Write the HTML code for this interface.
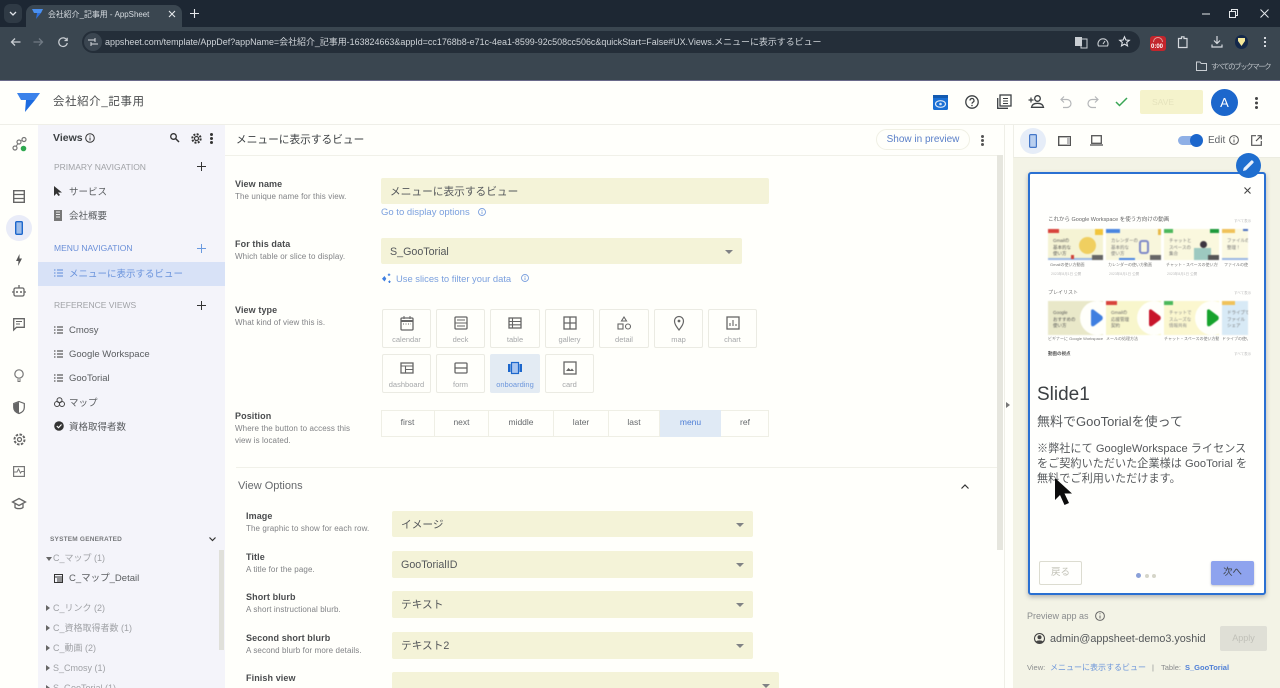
<!DOCTYPE html>
<html lang="ja"><head><meta charset="utf-8"><title>会社紹介_記事用 - AppSheet</title>
<style>
*{box-sizing:border-box}
html,body{margin:0;padding:0;width:1280px;height:688px;overflow:hidden;background:#fffffb;font-family:"Liberation Sans","Noto Sans CJK JP",sans-serif;color:#3c4043}
#root{position:absolute;left:0;top:0;width:1280px;height:688px;overflow:hidden}
.a{position:absolute}
.t{position:absolute;white-space:nowrap;line-height:1.2}
svg{position:absolute;overflow:visible}
.lbl{position:absolute;font-size:9px;font-weight:700;color:#4a4c4e;white-space:nowrap;letter-spacing:.1px}
.sub{position:absolute;font-size:8px;color:#808285;white-space:nowrap;letter-spacing:.1px;line-height:12px}
.fld{position:absolute;background:#f4f3d8;border-radius:2px;font-size:10.7px;color:#55585b;line-height:28px;padding-left:9px;white-space:nowrap;overflow:hidden}
.fld i{position:absolute;right:9px;top:12px;width:0;height:0;border-left:4px solid transparent;border-right:4px solid transparent;border-top:4px solid #808285}
.vt{position:absolute;width:50px;height:39px;border:1px solid #ebebe3;border-radius:2px;font-size:7.5px;color:#a5a7a9;text-align:center;padding-top:25px;line-height:10px}
.pos{position:absolute;top:410px;height:27px;border-right:1px solid #efefe5;font-size:8.5px;color:#66696c;text-align:center;line-height:25px}
.nav{position:absolute;left:69px;font-size:9.5px;color:#5a5d60;white-space:nowrap;line-height:14px;margin-top:2px}
.sec{position:absolute;left:54px;font-size:8.5px;color:#a0a2a6;white-space:nowrap;line-height:12px}
.plus{position:absolute;left:197px;width:9px;height:9px;background:linear-gradient(#333,#333) center/9px 1.4px no-repeat,linear-gradient(#333,#333) center/1.4px 9px no-repeat}
.sys{position:absolute;left:53px;font-size:9px;color:#a0a2a6;white-space:nowrap;line-height:12px}
.tri{position:absolute;left:46px;width:0;height:0;border-top:3px solid transparent;border-bottom:3px solid transparent;border-left:4px solid #666}
.thumb{position:absolute;background:#f5f3d4;overflow:hidden;filter:blur(.4px)}
.tg{position:absolute;font-size:4.5px;line-height:6.5px;color:#666;white-space:nowrap}
</style></head>
<body><div id="root">
<!-- browser chrome -->
<div class="a" style="left:0;top:0;width:1280px;height:27px;background:#1d2733"></div>
<div class="a" style="left:0;top:27px;width:1280px;height:54px;background:#3a4650"></div>
<div class="a" style="left:4px;top:4px;width:18px;height:19px;background:#2f3a45;border-radius:6px"></div>
<svg style="left:9px;top:11px" width="8" height="5"><path d="M1 1l3 3 3-3" fill="none" stroke="#dfe3e8" stroke-width="1.3"/></svg>
<div class="a" style="left:26px;top:5px;width:156px;height:24px;background:#3a4650;border-radius:8px 8px 0 0"></div>
<svg style="left:32px;top:9px" width="11" height="10"><path d="M0 0h11l-2 4H2z" fill="#4a90f0"/><path d="M5 4h4L4 10z" fill="#2d6fdc"/></svg>
<div class="t" style="left:48px;top:10px;font-size:7.9px;color:#d8dde2">会社紹介_記事用 - AppSheet</div>
<svg style="left:168px;top:10px" width="8" height="8"><path d="M1 1l6 6M7 1l-6 6" stroke="#e5e8eb" stroke-width="1.1"/></svg>
<svg style="left:190px;top:9px" width="9" height="9"><path d="M4.500 0v9M0 4.500h9" stroke="#e5e8eb" stroke-width="1.1"/></svg>
<svg style="left:1202px;top:13px" width="8" height="2"><path d="M0 1h8" stroke="#e5e8eb"/></svg>
<svg style="left:1229px;top:9px" width="9" height="9"><path d="M.5 2.500h6v6h-6zM2.500 2.500v-2h6v6h-2" fill="none" stroke="#e5e8eb"/></svg>
<svg style="left:1260px;top:9px" width="9" height="9"><path d="M.5.5l8 8M8.500.5l-8 8" stroke="#e5e8eb"/></svg>
<svg style="left:10px;top:37px" width="11" height="10"><path d="M10.500 5H1.500M5 1.500L1.500 5 5 8.500" fill="none" stroke="#c9ced3" stroke-width="1.3"/></svg>
<svg style="left:33px;top:37px" width="11" height="10"><path d="M.5 5h9M6 1.500L9.500 5 6 8.500" fill="none" stroke="#707a84" stroke-width="1.3"/></svg>
<svg style="left:58px;top:37px" width="10" height="10"><path d="M8.800 3A4.300 4.300 0 1 0 9.300 6M9.200.8v2.700H6.500" fill="none" stroke="#c9ced3" stroke-width="1.2"/></svg>
<div class="a" style="left:82px;top:31px;width:1058px;height:22px;background:#242e39;border-radius:11px"></div>
<div class="a" style="left:84px;top:33px;width:18px;height:18px;background:#3a4550;border-radius:9px"></div>
<svg style="left:88px;top:38px" width="10" height="8"><path d="M0 2h7M3 6h7M7 0v4M3 4v4" stroke="#d5d9de"/></svg>
<div class="t" style="left:105px;top:37px;font-size:8.95px;color:#cfd4d9">appsheet.com/template/AppDef?appName=会社紹介_記事用-163824663&amp;appId=cc1768b8-e71c-4ea1-8599-92c508cc506c&amp;quickStart=False#UX.Views.メニューに表示するビュー</div>
<svg style="left:1075px;top:36px" width="12" height="12"><rect x="0" y="1" width="7" height="9" fill="#c9ced3"/><rect x="6" y="3" width="6" height="9" fill="none" stroke="#c9ced3"/></svg>
<svg style="left:1097px;top:37px" width="12" height="10"><path d="M1.500 9A5 5 0 1 1 10.500 9zM6 7l2-3" fill="none" stroke="#c9ced3" stroke-width="1.100"/></svg>
<svg style="left:1119px;top:36px" width="11" height="11"><path d="M5.500.8l1.400 3.200 3.400.3-2.600 2.200.8 3.400-3-1.800-3 1.800.8-3.400L.7 4.300l3.400-.3z" fill="none" stroke="#dfe3e8" stroke-width="1.100"/></svg>
<div class="a" style="left:1150px;top:36px;width:16px;height:15px;background:#c3252c;border-radius:3px"></div>
<div class="a" style="left:1153px;top:37px;width:10px;height:5px;border:1.500px solid #e2a29e;border-bottom:0;border-radius:5px 5px 0 0"></div>
<div class="t" style="left:1151px;top:44px;font-size:6px;color:#fff;font-weight:700">0:00</div>
<svg style="left:1177px;top:36px" width="11" height="12"><path d="M1.500 2.500h3V.8h2.500v1.700h3v9h-8.500z" fill="none" stroke="#d5d9de" stroke-width="1.200"/></svg>
<svg style="left:1211px;top:36px" width="12" height="12"><path d="M6 0v7M3 4.500L6 7.500l3-3M1 8.500v2.500h10V8.500" fill="none" stroke="#d5d9de" stroke-width="1.200"/></svg>
<div class="a" style="left:1235px;top:35px;width:13px;height:14px;background:#14284a;border-radius:7px"></div>
<svg style="left:1238px;top:38px" width="7" height="8"><path d="M0 0h7v3L3.500 8 0 3z" fill="#f5e89a"/></svg>
<div class="a" style="left:1264px;top:37px;width:2px;height:2px;background:#d5d9de;box-shadow:0 4px #d5d9de,0 8px #d5d9de"></div>
<svg style="left:1196px;top:61px" width="11" height="10"><path d="M.5 1h3.500l1.200 1.500h5.300v7H.5z" fill="none" stroke="#c9ced3"/></svg>
<div class="t" style="left:1211px;top:62px;font-size:7.5px;color:#bfc4c9;letter-spacing:-1.500px">すべてのブックマーク</div>
<div class="a" style="left:0;top:80px;width:1280px;height:1px;background:#6a6a8a"></div>

<!-- app header -->
<div class="a" style="left:0;top:81px;width:1280px;height:44px;background:#fffffb"></div>
<div class="a" style="left:0;top:124px;width:1280px;height:1px;background:#efefe8"></div>
<svg style="left:17px;top:93px" width="23" height="19"><path d="M0 0h23l-5 7H4z" fill="#3b82ea"/><path d="M9 7h9L8 19z" fill="#1c6be0"/></svg>
<div class="t" style="left:53px;top:96px;font-size:11.4px;color:#4a4c4e;letter-spacing:.7px">会社紹介_記事用</div>
<svg style="left:933px;top:95px" width="15" height="15"><rect width="15" height="15" rx="1.500" fill="#1a6fd4"/><rect y="0" width="15" height="3" fill="#135ab0"/><ellipse cx="7.500" cy="9" rx="5" ry="3.300" fill="none" stroke="#d8e6f8" stroke-width="1.200"/><circle cx="7.500" cy="9" r="1.300" fill="#d8e6f8"/></svg>
<svg style="left:965px;top:95px" width="14" height="14"><circle cx="7" cy="7" r="6.200" fill="none" stroke="#3c4043" stroke-width="1.300"/><path d="M5 5.500a2 2 0 1 1 3 1.700c-.7.400-1 .9-1 1.500" fill="none" stroke="#3c4043" stroke-width="1.200"/><circle cx="7" cy="10.500" r=".8" fill="#3c4043"/></svg>
<svg style="left:997px;top:95px" width="14" height="14"><rect x="3" y="0" width="11" height="11" fill="none" stroke="#3c4043" stroke-width="1.300"/><path d="M.7 3v10.300H11" fill="none" stroke="#3c4043" stroke-width="1.300"/><path d="M6 3.500h5M6 6h5M6 8.500h5" stroke="#3c4043"/></svg>
<svg style="left:1028px;top:95px" width="16" height="13"><circle cx="9.500" cy="3.500" r="2.800" fill="none" stroke="#3c4043" stroke-width="1.300"/><path d="M3.500 12.300c.5-3 3-4 6-4s5.500 1 6 4z" fill="none" stroke="#3c4043" stroke-width="1.300"/><path d="M3 2.500v5M.5 5h5" stroke="#3c4043" stroke-width="1.200"/></svg>
<svg style="left:1060px;top:96px" width="12" height="12"><path d="M4 .5L1 3.500l3 3M1 3.500h6a4 4 0 0 1 0 8H3" fill="none" stroke="#b5b7b9" stroke-width="1.200"/></svg>
<svg style="left:1087px;top:96px" width="12" height="12"><path d="M8 .5l3 3-3 3M11 3.500H5a4 4 0 0 0 0 8h4" fill="none" stroke="#b5b7b9" stroke-width="1.200"/></svg>
<svg style="left:1115px;top:97px" width="13" height="10"><path d="M1 5l3.500 3.500L12 1" fill="none" stroke="#3aa655" stroke-width="1.500"/></svg>
<div class="a" style="left:1140px;top:90px;width:63px;height:24px;background:#f5f3cc;border-radius:2px"></div>
<div class="t" style="left:1152px;top:97px;font-size:8.500px;color:#e5e3bd">SAVE</div>
<div class="a" style="left:1211px;top:89px;width:27px;height:27px;border-radius:50%;background:#1c67cc;color:#fff;font-size:13px;text-align:center;line-height:27px">A</div>
<div class="a" style="left:1255px;top:97px;width:3px;height:3px;background:#444;border-radius:50%;box-shadow:0 4.500px #444,0 9px #444"></div>

<!-- left rail -->
<div class="a" style="left:0;top:125px;width:38px;height:563px;background:#fffffb"></div>
<svg style="left:12px;top:137px" width="15" height="15"><circle cx="3" cy="11" r="2" fill="none" stroke="#777" stroke-width="1.200"/><circle cx="7" cy="5" r="2" fill="none" stroke="#777" stroke-width="1.200"/><circle cx="12" cy="2.500" r="2" fill="none" stroke="#777" stroke-width="1.200"/><path d="M4 9.500L6 6.500M9 4l1.500-1" stroke="#777"/><circle cx="11.500" cy="11.500" r="2.800" fill="#2fa84f"/></svg>
<svg style="left:13px;top:190px" width="12" height="13"><rect x=".7" y=".7" width="10.600" height="11.600" fill="none" stroke="#666" stroke-width="1.400"/><path d="M1 4.500h10M1 8.500h10" stroke="#666" stroke-width="1.300"/></svg>
<div class="a" style="left:6px;top:215px;width:26px;height:26px;border-radius:50%;background:#e9ecf8"></div>
<svg style="left:15px;top:221px" width="8" height="14"><rect x=".7" y=".7" width="6.600" height="12.600" rx="1" fill="#9dbdea" stroke="#1c67cc" stroke-width="1.400"/></svg>
<svg style="left:16px;top:254px" width="6" height="12"><path d="M3.500 0L0 7h2.500L2 12 6 4.500H3.500z" fill="#555"/></svg>
<svg style="left:12px;top:284px" width="14" height="13"><rect x="2" y="4" width="10" height="8" rx="1.500" fill="none" stroke="#666" stroke-width="1.300"/><path d="M0 8h2M12 8h2M7 1v3" stroke="#666" stroke-width="1.300"/><circle cx="5" cy="8" r="1" fill="#666"/><circle cx="9" cy="8" r="1" fill="#666"/></svg>
<svg style="left:13px;top:318px" width="12" height="13"><path d="M.7.700h10.600v8.600H3.500L.7 12z" fill="none" stroke="#666" stroke-width="1.300"/><path d="M3 3.500h6M3 6h4" stroke="#666"/></svg>
<svg style="left:14px;top:369px" width="10" height="13"><circle cx="5" cy="5" r="4.200" fill="none" stroke="#777" stroke-width="1.200"/><path d="M3 11h4M3.500 12.500h3" stroke="#777"/></svg>
<svg style="left:13px;top:401px" width="12" height="13"><path d="M6 .5l5.300 2v4c0 3-2.300 5-5.300 6-3-1-5.300-3-5.300-6v-4z" fill="none" stroke="#666" stroke-width="1.200"/><path d="M6 1v11c-3-1-5-3-5-5.500V3z" fill="#666"/></svg>
<svg style="left:13px;top:433px" width="13" height="13"><circle cx="6.500" cy="6.500" r="2" fill="none" stroke="#666" stroke-width="1.200"/><circle cx="6.500" cy="6.500" r="5" fill="none" stroke="#666" stroke-width="2" stroke-dasharray="2.500 1.400"/></svg>
<svg style="left:13px;top:466px" width="12" height="11"><rect x=".6" y=".6" width="10.800" height="9.800" fill="none" stroke="#777" stroke-width="1.200"/><path d="M1 6h3l1.500-3 2 4 1-1.500h2.500" fill="none" stroke="#777"/></svg>
<svg style="left:12px;top:498px" width="14" height="12"><path d="M7 .5L13.500 4 7 7.500.5 4z" fill="none" stroke="#666" stroke-width="1.300"/><path d="M3 6v3.500c1.500 1.500 6.500 1.500 8 0V6" fill="none" stroke="#666" stroke-width="1.300"/></svg>

<!-- views sidebar -->
<div class="a" style="left:38px;top:125px;width:187px;height:563px;background:#f4f4fa"></div>
<div class="t" style="left:53px;top:132px;font-size:10.500px;color:#3c4043;font-weight:700">Views</div>
<svg style="left:85px;top:133px" width="10" height="10"><circle cx="5" cy="5" r="4.300" fill="none" stroke="#333"/><path d="M5 4.500v3M5 2.500v1" stroke="#333"/></svg>
<svg style="left:170px;top:133px" width="9" height="9"><circle cx="3.500" cy="3.500" r="2.800" fill="none" stroke="#333" stroke-width="1.300"/><path d="M5.500 5.500L9 9" stroke="#333" stroke-width="1.500"/></svg>
<svg style="left:191px;top:133px" width="11" height="11"><circle cx="5.500" cy="5.500" r="2" fill="none" stroke="#333" stroke-width="1.200"/><circle cx="5.500" cy="5.500" r="4.200" fill="none" stroke="#333" stroke-width="2" stroke-dasharray="2 1.300"/></svg>
<div class="a" style="left:210px;top:133px;width:3px;height:3px;background:#333;border-radius:50%;box-shadow:0 4px #333,0 8px #333"></div>
<div class="sec" style="top:161px">PRIMARY NAVIGATION</div><div class="plus" style="top:162px"></div>
<svg style="left:54px;top:186px" width="8" height="10"><path d="M0 0v10l2.500-2.500L4.500 10 6 9 4 6.500h4z" fill="#333"/></svg>
<div class="nav" style="top:184px">サービス</div>
<svg style="left:54px;top:210px" width="8" height="11"><rect width="8" height="11" fill="#777"/><path d="M2 2h4M2 4.500h4M2 7h4" stroke="#eee"/></svg>
<div class="nav" style="top:208px">会社概要</div>
<div class="sec" style="top:242px;color:#6a8fd8">MENU NAVIGATION</div><div class="plus" style="top:244px;background:linear-gradient(#6a9adf,#6a9adf) center/9px 1.400px no-repeat,linear-gradient(#6a9adf,#6a9adf) center/1.400px 9px no-repeat"></div>
<div class="a" style="left:38px;top:262px;width:187px;height:24px;background:#d8e2f7"></div>
<svg class="li" style="left:54px;top:269px" width="9" height="8"><path d="M3 1h6M3 4h6M3 7h6" stroke="#5c8ad8" stroke-width="1.100"/><path d="M0 1h1.500M0 4h1.500M0 7h1.500" stroke="#5c8ad8" stroke-width="1.100"/></svg>
<div class="nav" style="top:266px;color:#6a93dc">メニューに表示するビュー</div>
<div class="sec" style="top:299px">REFERENCE VIEWS</div><div class="plus" style="top:301px"></div>
<svg style="left:54px;top:326px" width="9" height="8"><path d="M3 1h6M3 4h6M3 7h6M0 1h1.500M0 4h1.500M0 7h1.500" stroke="#333" stroke-width="1.100"/></svg>
<div class="nav" style="top:322px">Cmosy</div>
<svg style="left:54px;top:350px" width="9" height="8"><path d="M3 1h6M3 4h6M3 7h6M0 1h1.500M0 4h1.500M0 7h1.500" stroke="#333" stroke-width="1.100"/></svg>
<div class="nav" style="top:346px">Google Workspace</div>
<svg style="left:54px;top:374px" width="9" height="8"><path d="M3 1h6M3 4h6M3 7h6M0 1h1.500M0 4h1.500M0 7h1.500" stroke="#333" stroke-width="1.100"/></svg>
<div class="nav" style="top:370px">GooTorial</div>
<svg style="left:54px;top:397px" width="11" height="10"><circle cx="5.500" cy="3.200" r="2.500" fill="none" stroke="#444"/><circle cx="3" cy="7" r="2.500" fill="none" stroke="#444"/><circle cx="8" cy="7" r="2.500" fill="none" stroke="#444"/></svg>
<div class="nav" style="top:395px">マップ</div>
<svg style="left:54px;top:421px" width="10" height="10"><circle cx="5" cy="5" r="4.800" fill="#333"/><path d="M2.800 5l1.700 1.700L7.500 3.500" fill="none" stroke="#fff" stroke-width="1.100"/></svg>
<div class="nav" style="top:419px">資格取得者数</div>
<div class="t" style="left:50px;top:536px;font-size:6.500px;color:#77797c;font-weight:700;letter-spacing:.2px">SYSTEM GENERATED</div>
<svg style="left:209px;top:537px" width="7" height="5"><path d="M.5.500l3 3 3-3" fill="none" stroke="#333" stroke-width="1.200"/></svg>
<div class="a" style="left:46px;top:557px;width:0;height:0;border-left:3px solid transparent;border-right:3px solid transparent;border-top:4px solid #666"></div>
<div class="sys" style="top:552px">C_マップ (1)</div>
<svg style="left:54px;top:574px" width="9" height="9"><rect x=".5" y=".5" width="8" height="8" fill="none" stroke="#333"/><path d="M0 3h9M3 5h6M3 7h6" stroke="#333"/></svg>
<div class="nav" style="top:570px">C_マップ_Detail</div>
<div class="tri" style="top:605px"></div><div class="sys" style="top:602px">C_リンク (2)</div>
<div class="tri" style="top:625px"></div><div class="sys" style="top:622px">C_資格取得者数 (1)</div>
<div class="tri" style="top:645px"></div><div class="sys" style="top:642px">C_動画 (2)</div>
<div class="tri" style="top:665px"></div><div class="sys" style="top:662px">S_Cmosy (1)</div>
<div class="tri" style="top:685px"></div><div class="sys" style="top:682px">S_GooTorial (1)</div>
<div class="a" style="left:219px;top:550px;width:5px;height:100px;background:#e0e0da"></div>

<!-- main -->
<div class="a" style="left:225px;top:125px;width:788px;height:563px;background:#fffffb"></div>
<div class="a" style="left:225px;top:155px;width:772px;height:1px;background:#f1f1e9"></div>
<div class="t" style="left:236px;top:134px;font-size:10.7px;color:#3c4043">メニューに表示するビュー</div>
<div class="a" style="left:876px;top:129px;width:94px;height:21px;border:1px solid #f0f0e4;border-radius:11px;font-size:10px;color:#5a7fc8;text-align:center;line-height:19px">Show in preview</div>
<div class="a" style="left:981px;top:135px;width:3px;height:3px;background:#555;border-radius:50%;box-shadow:0 4px #555,0 8px #555"></div>
<div class="a" style="left:997px;top:155px;width:6px;height:395px;background:#e6e6de"></div>
<div class="a" style="left:1004px;top:125px;width:1px;height:563px;background:#efefe7"></div>
<div class="a" style="left:1006px;top:402px;width:0;height:0;border-top:3.500px solid transparent;border-bottom:3.500px solid transparent;border-left:4px solid #777"></div>

<div class="lbl" style="left:235px;top:179px">View name</div>
<div class="sub" style="left:235px;top:191px">The unique name for this view.</div>
<div class="fld" style="left:381px;top:178px;width:388px;height:26px">メニューに表示するビュー</div>
<div class="t" style="left:381px;top:207px;font-size:9.5px;color:#7ba0de">Go to display options</div>
<svg style="left:478px;top:208px" width="8" height="8"><circle cx="4" cy="4" r="3.500" fill="none" stroke="#7ba0de" stroke-width=".9"/><path d="M4 3.500v2.500M4 2v.9" stroke="#7ba0de" stroke-width=".9"/></svg>

<div class="lbl" style="left:235px;top:239px">For this data</div>
<div class="sub" style="left:235px;top:251px">Which table or slice to display.</div>
<div class="fld" style="left:381px;top:238px;width:361px;height:26px">S_GooTorial<i></i></div>
<svg style="left:381px;top:273px" width="11" height="11"><path d="M3.500 3l1.800 2.800L3.500 8.500 1 5.800z" fill="#3f7fe0"/><path d="M8 .5v2.500M6.800 1.800h2.500M8.500 7.500v2.500M7.200 8.800h2.500" stroke="#3f7fe0"/></svg>
<div class="t" style="left:396px;top:273px;font-size:9.400px;color:#7ba0de">Use slices to filter your data</div>
<svg style="left:521px;top:274px" width="8" height="8"><circle cx="4" cy="4" r="3.500" fill="none" stroke="#7ba0de" stroke-width=".9"/><path d="M4 3.500v2.500M4 2v.9" stroke="#7ba0de" stroke-width=".9"/></svg>

<div class="lbl" style="left:235px;top:305px">View type</div>
<div class="sub" style="left:235px;top:317px">What kind of view this is.</div>
<div class="vt" style="left:382px;top:309px;width:49px"><svg width="15" height="15" style="left:17px;top:6px"><rect x="1" y="2" width="12" height="12" rx="1" fill="none" stroke="#666" stroke-width="1.300"/><path d="M1 5h12" stroke="#666" stroke-width="2"/><path d="M4 0v3M10 0v3" stroke="#666"/><path d="M3 8h8" stroke="#666" stroke-dasharray="1 1.500"/></svg>calendar</div>
<div class="vt" style="left:436px;top:309px;width:49px"><svg width="15" height="15" style="left:17px;top:6px"><rect x="1" y="1" width="12" height="12" rx="1" fill="none" stroke="#666" stroke-width="1.300"/><path d="M1 7h12M3 4h8M3 10h8" stroke="#666"/></svg>deck</div>
<div class="vt" style="left:490px;top:309px"><svg width="15" height="15" style="left:17px;top:6px"><rect x="1" y="2" width="12" height="10" fill="none" stroke="#666" stroke-width="1.300"/><path d="M1 5.500h12M1 8.800h12M4.500 2v10" stroke="#666" stroke-width="1.100"/></svg>table</div>
<div class="vt" style="left:545px;top:309px;width:49px"><svg width="15" height="15" style="left:17px;top:6px"><rect x="1" y="1" width="12" height="12" fill="none" stroke="#666" stroke-width="1.300"/><path d="M7 1v12M1 7h12" stroke="#666" stroke-width="1.300"/></svg>gallery</div>
<div class="vt" style="left:599px;top:309px"><svg width="15" height="15" style="left:17px;top:6px"><path d="M7 1l2.500 4h-5z" fill="none" stroke="#666" stroke-width="1.100"/><rect x="1" y="8" width="5" height="5" fill="none" stroke="#666" stroke-width="1.100"/><circle cx="11" cy="10.500" r="2.500" fill="none" stroke="#666" stroke-width="1.100"/></svg>detail</div>
<div class="vt" style="left:654px;top:309px;width:49px"><svg width="15" height="15" style="left:17px;top:6px"><path d="M7 14C4 10 2.500 7.800 2.500 5a4.500 4.500 0 0 1 9 0c0 2.800-1.500 5-4.500 9z" fill="none" stroke="#666" stroke-width="1.200"/><circle cx="7" cy="5" r="1.400" fill="#666"/></svg>map</div>
<div class="vt" style="left:708px;top:309px;width:49px"><svg width="15" height="15" style="left:17px;top:6px"><rect x="1" y="1" width="12" height="12" fill="none" stroke="#666" stroke-width="1.300"/><path d="M4 10V7M7 10V4M10 10V8" stroke="#666" stroke-width="1.100"/></svg>chart</div>
<div class="vt" style="left:382px;top:354px;width:49px"><svg width="15" height="15" style="left:17px;top:6px"><rect x="1" y="2" width="12" height="10" fill="none" stroke="#666" stroke-width="1.300"/><path d="M1 5h12M5.500 5v7M5.500 8.500h8" stroke="#666" stroke-width="1.100"/></svg>dashboard</div>
<div class="vt" style="left:436px;top:354px;width:49px"><svg width="15" height="15" style="left:17px;top:6px"><rect x="1" y="2" width="12" height="10" rx="1" fill="none" stroke="#666" stroke-width="1.300"/><path d="M1 7h12" stroke="#666" stroke-width="1.300"/></svg>form</div>
<div class="vt" style="left:490px;top:354px;background:#e3ebf3;border-color:#e3ebf3;color:#6d97dc"><svg width="15" height="15" style="left:17px;top:6px"><rect x="3.500" y="1.500" width="7" height="11" fill="#a9c5ef" stroke="#1c67cc" stroke-width="1.200"/><rect x="0" y="3" width="2.500" height="8" fill="#1c67cc"/><rect x="11.500" y="3" width="2.500" height="8" fill="#1c67cc"/></svg>onboarding</div>
<div class="vt" style="left:545px;top:354px;width:49px"><svg width="15" height="15" style="left:17px;top:6px"><rect x="1" y="1" width="12" height="12" fill="none" stroke="#666" stroke-width="1.300"/><path d="M3 10l2.500-3 2 2 1.500-1.500L11 10z" fill="#666"/></svg>card</div>

<div class="lbl" style="left:235px;top:411px">Position</div>
<div class="sub" style="left:235px;top:423px">Where the button to access this</div>
<div class="sub" style="left:235px;top:435px">view is located.</div>
<div class="a" style="left:381px;top:410px;width:388px;height:27px;border:1px solid #efefe5"></div>
<div class="pos" style="left:381px;width:54px">first</div>
<div class="pos" style="left:435px;width:54px">next</div>
<div class="pos" style="left:489px;width:65px">middle</div>
<div class="pos" style="left:554px;width:55px">later</div>
<div class="pos" style="left:609px;width:51px">last</div>
<div class="pos" style="left:660px;width:61px;background:#e0eaf5;color:#4f7fd6;border-right:0;top:410px">menu</div>
<div class="pos" style="left:721px;width:48px;border-right:0">ref</div>

<div class="a" style="left:236px;top:467px;width:761px;height:1px;background:#f1f1e9"></div>
<div class="t" style="left:238px;top:480px;font-size:11px;color:#66696c">View Options</div>
<svg style="left:961px;top:484px" width="8" height="5"><path d="M.5 4.500l3.500-3.500 3.500 3.500" fill="none" stroke="#333" stroke-width="1.200"/></svg>

<div class="lbl" style="left:246px;top:511px">Image</div>
<div class="sub" style="left:246px;top:523px">The graphic to show for each row.</div>
<div class="fld" style="left:392px;top:511px;width:361px;height:26px">イメージ<i></i></div>
<div class="lbl" style="left:246px;top:552px">Title</div>
<div class="sub" style="left:246px;top:564px">A title for the page.</div>
<div class="fld" style="left:392px;top:551px;width:361px;height:27px">GooTorialID<i></i></div>
<div class="lbl" style="left:246px;top:592px">Short blurb</div>
<div class="sub" style="left:246px;top:604px">A short instructional blurb.</div>
<div class="fld" style="left:392px;top:591px;width:361px;height:27px">テキスト<i></i></div>
<div class="lbl" style="left:246px;top:633px">Second short blurb</div>
<div class="sub" style="left:246px;top:645px">A second blurb for more details.</div>
<div class="fld" style="left:392px;top:632px;width:361px;height:27px">テキスト2<i></i></div>
<div class="lbl" style="left:246px;top:673px">Finish view</div>
<div class="fld" style="left:392px;top:672px;width:387px;height:27px"><i></i></div>

<!-- right panel -->
<div class="a" style="left:1013px;top:125px;width:267px;height:563px;background:#f3f3e6"></div>
<div class="a" style="left:1013px;top:125px;width:267px;height:33px;background:#fffffb;border-bottom:1px solid #ecece0;border-left:1px solid #efefe7"></div>
<div class="a" style="left:1020px;top:128px;width:26px;height:26px;border-radius:50%;background:#e6edf8"></div>
<svg style="left:1029px;top:134px" width="8" height="14"><rect x=".6" y=".6" width="6.800" height="12.800" rx="1" fill="#b9cfef" stroke="#4477c8" stroke-width="1.200"/></svg>
<svg style="left:1058px;top:136px" width="13" height="10"><rect x=".7" y=".7" width="11.600" height="8.600" fill="none" stroke="#555" stroke-width="1.400"/><rect x="9" y="1" width="3" height="8" fill="#bbb"/></svg>
<svg style="left:1090px;top:135px" width="13" height="11"><rect x="1.700" y=".7" width="9.600" height="7.600" fill="none" stroke="#555" stroke-width="1.300"/><path d="M0 10h13" stroke="#555" stroke-width="1.300"/></svg>
<div class="a" style="left:1178px;top:136px;width:24px;height:9px;border-radius:5px;background:#8fb0e6"></div>
<div class="a" style="left:1190px;top:134px;width:13px;height:13px;border-radius:50%;background:#1c67cc"></div>
<div class="t" style="left:1208px;top:135px;font-size:10px;color:#5f6368">Edit</div>
<svg style="left:1229px;top:135px" width="10" height="10"><circle cx="5" cy="5" r="4.400" fill="none" stroke="#555"/><path d="M5 4.500v3M5 2.300v1" stroke="#555"/></svg>
<svg style="left:1251px;top:135px" width="11" height="11"><path d="M5 .7H.7v9.600h9.600V6M6.500.7h3.800v3.800M10 1L5 6" fill="none" stroke="#555" stroke-width="1.200"/></svg>

<!-- preview card -->
<div class="a" style="left:1028px;top:172px;width:238px;height:423px;background:#fffffd;border:2px solid #2a70d2;border-radius:3px;box-shadow:0 2px 5px rgba(60,60,80,.35)"></div>
<div class="a" style="left:1236px;top:153px;width:25px;height:25px;border-radius:50%;background:#1f6ecf"></div>
<svg style="left:1243px;top:160px" width="11" height="11"><path d="M0 11l.7-3L8 .7a1.200 1.200 0 0 1 1.700 0l.6.600a1.200 1.200 0 0 1 0 1.700L3 10.300z" fill="#e9f0fb"/></svg>
<svg style="left:1244px;top:187px" width="7" height="7"><path d="M.5.500l6 6M6.500.500l-6 6" stroke="#444" stroke-width="1.100"/></svg>

<!-- preview thumbnails -->
<div class="t" style="left:1048px;top:217px;font-size:5.500px;color:#666">これから Google Workspace を使う方向けの動画</div>
<div class="t" style="left:1234px;top:219px;font-size:3.500px;color:#bbb">すべて表示</div>
<div class="thumb" style="left:1048px;top:229px;width:55px;height:31px"><div class="a" style="left:0;top:0;width:11px;height:4px;background:#d8443c"></div><div class="tg" style="left:5px;top:9px;color:#555">Gmailの<br>基本的な<br>使い方</div><div class="a" style="left:31px;top:8px;width:17px;height:17px;border-radius:50%;background:#f0cf60"></div><div class="a" style="left:47px;top:0;width:8px;height:6px;background:#f2c53a"></div><div class="a" style="left:0;top:29px;width:55px;height:2px;background:#9ab7e3"></div><div class="a" style="left:23px;top:26px;width:3px;height:4px;background:#d04038"></div><div class="a" style="left:44px;top:26px;width:11px;height:5px;background:#666"></div></div>
<div class="thumb" style="left:1106px;top:229px;width:55px;height:31px;background:#f8f6dc"><div class="a" style="left:0;top:0;width:14px;height:4px;background:#4a86e0"></div><div class="tg" style="left:5px;top:9px;color:#777">カレンダーの<br>基本的な<br>使い方</div><div class="a" style="left:33px;top:11px;width:10px;height:14px;border:2px solid #7d88c8;border-radius:3px"></div><div class="a" style="left:52px;top:0;width:3px;height:6px;background:#e8b948"></div><div class="a" style="left:13px;top:29px;width:16px;height:2px;background:#4a86e0"></div><div class="a" style="left:44px;top:26px;width:11px;height:5px;background:#666"></div></div>
<div class="thumb" style="left:1164px;top:229px;width:55px;height:31px;background:#faf8de"><div class="a" style="left:0;top:0;width:9px;height:4px;background:#4cb85c"></div><div class="tg" style="left:5px;top:9px;color:#777">チャットと<br>スペースの<br>集合</div><div class="a" style="left:36px;top:12px;width:7px;height:7px;border-radius:50%;background:#3c3540"></div><div class="a" style="left:30px;top:19px;width:17px;height:12px;background:#9dc9c0"></div><div class="a" style="left:46px;top:0;width:9px;height:4px;background:#1f9a3c"></div><div class="a" style="left:44px;top:26px;width:11px;height:5px;background:#555"></div></div>
<div class="thumb" style="left:1222px;top:229px;width:26px;height:31px;background:#fbf9e2"><div class="a" style="left:0;top:0;width:13px;height:4px;background:#f0c25a"></div><div class="tg" style="left:5px;top:9px;color:#777">ファイルの<br>整理！</div><div class="a" style="left:21px;top:0;width:5px;height:2px;background:#4a70c0"></div><div class="a" style="left:0;top:29px;width:26px;height:2px;background:#9ab7e3"></div></div>
<div class="tg" style="left:1050px;top:262px;font-size:4px;color:#777">Gmailの使い方動画</div>
<div class="tg" style="left:1108px;top:262px;font-size:4px;color:#777">カレンダーの使い方動画</div>
<div class="tg" style="left:1166px;top:262px;font-size:4px;color:#777;width:52px;overflow:hidden">チャット・スペースの使い方動画</div>
<div class="tg" style="left:1224px;top:262px;font-size:4px;color:#777;width:24px;overflow:hidden">ファイルの使い方</div>
<div class="tg" style="left:1051px;top:271px;font-size:3.500px;color:#bbb">2023年8月1日 公開</div>
<div class="tg" style="left:1109px;top:271px;font-size:3.500px;color:#bbb">2023年8月1日 公開</div>
<div class="tg" style="left:1167px;top:271px;font-size:3.500px;color:#bbb">2023年8月1日 公開</div>

<div class="t" style="left:1048px;top:290px;font-size:5px;color:#777">プレイリスト</div>
<div class="t" style="left:1234px;top:291px;font-size:3.500px;color:#bbb">すべて表示</div>
<div class="thumb" style="left:1048px;top:301px;width:55px;height:34px;background:#e9e8c9"><div class="tg" style="left:5px;top:9px;color:#555">Google<br>おすすめの<br>使い方</div><div class="a" style="left:32px;top:0;width:34px;height:34px;border-radius:50%;background:#fffffb"></div><svg style="left:43px;top:8px" width="12" height="18"><path d="M0 2c0-2 2-2 3-1l8 6c1 1 1 3 0 4l-8 6c-2 1-3 0-3-2z" fill="#3f7fe0"/></svg></div>
<div class="thumb" style="left:1106px;top:301px;width:55px;height:34px;background:#f8f6cc"><div class="a" style="left:0;top:0;width:11px;height:4px;background:#d8443c"></div><div class="tg" style="left:5px;top:9px;color:#666">Gmailの<br>応援管理<br>契約</div><div class="a" style="left:31px;top:0;width:34px;height:34px;border-radius:50%;background:#fffffb"></div><svg style="left:43px;top:8px" width="12" height="18"><path d="M0 2c0-2 2-2 3-1l8 6c1 1 1 3 0 4l-8 6c-2 1-3 0-3-2z" fill="#c8152a"/></svg></div>
<div class="thumb" style="left:1164px;top:301px;width:55px;height:34px;background:#fbf7cf"><div class="a" style="left:0;top:0;width:9px;height:4px;background:#4cb85c"></div><div class="tg" style="left:5px;top:9px;color:#888">チャットで<br>スムーズな<br>情報共有</div><div class="a" style="left:31px;top:0;width:34px;height:34px;border-radius:50%;background:#fffffb"></div><svg style="left:43px;top:8px" width="12" height="18"><path d="M0 2c0-2 2-2 3-1l8 6c1 1 1 3 0 4l-8 6c-2 1-3 0-3-2z" fill="#16a32c"/></svg></div>
<div class="thumb" style="left:1222px;top:301px;width:26px;height:34px;background:#d8eaf6"><div class="a" style="left:0;top:0;width:13px;height:4px;background:#f0c25a"></div><div class="tg" style="left:5px;top:9px;color:#777">ドライブで<br>ファイル<br>シェア</div></div>
<div class="tg" style="left:1048px;top:336px;font-size:4px;color:#777;width:55px;overflow:hidden">ビギナーに Google Workspace 動画</div>
<div class="tg" style="left:1106px;top:336px;font-size:4px;color:#777">メールの処理方法</div>
<div class="tg" style="left:1164px;top:336px;font-size:4px;color:#777;width:55px;overflow:hidden">チャット・スペースの使い方動画</div>
<div class="tg" style="left:1222px;top:336px;font-size:4px;color:#777;width:26px;overflow:hidden">ドライブの使い方</div>
<div class="t" style="left:1048px;top:351px;font-size:4.500px;color:#555;font-weight:700">動画の視点</div>
<div class="t" style="left:1234px;top:352px;font-size:3.500px;color:#bbb">すべて表示</div>

<div class="t" style="left:1037px;top:384px;font-size:19px;color:#3c4043">Slide1</div>
<div class="t" style="left:1037px;top:414px;font-size:13px;color:#55585b">無料でGooTorialを使って</div>
<div class="t" style="left:1037px;top:442px;font-size:11.100px;color:#55585b;line-height:15px;letter-spacing:.05px">※弊社にて GoogleWorkspace ライセンス<br>をご契約いただいた企業様は GooTorial を<br>無料でご利用いただけます。</div>
<svg style="left:1054px;top:477px" width="19" height="29"><path d="M1 1v22l5-5 4.500 10 4.500-2-4.500-9.500H18z" fill="#0c0c0c"/></svg>

<div class="a" style="left:1039px;top:561px;width:43px;height:24px;border:1px solid #dcdcd0;border-radius:2px;font-size:9.500px;color:#c3c3b8;text-align:center;line-height:22px">戻る</div>
<div class="a" style="left:1136px;top:573px;width:5px;height:5px;border-radius:50%;background:#8aa0d8"></div>
<div class="a" style="left:1145px;top:574px;width:4px;height:4px;border-radius:50%;background:#d5d5c8"></div>
<div class="a" style="left:1152px;top:574px;width:4px;height:4px;border-radius:50%;background:#d5d5c8"></div>
<div class="a" style="left:1211px;top:561px;width:43px;height:24px;background:#8ea3ee;border-radius:2px;font-size:9.500px;color:#3c4043;text-align:center;line-height:24px;box-shadow:0 1px 2px rgba(60,60,80,.3)">次へ</div>

<div class="t" style="left:1027px;top:611px;font-size:9px;color:#8a8c8e">Preview app as</div>
<svg style="left:1095px;top:611px" width="10" height="10"><circle cx="5" cy="5" r="4.400" fill="none" stroke="#666"/><path d="M5 4.500v3M5 2.300v1" stroke="#666"/></svg>
<svg style="left:1034px;top:633px" width="11" height="11"><circle cx="5.500" cy="5.500" r="5" fill="none" stroke="#444" stroke-width="1.100"/><circle cx="5.500" cy="4.300" r="2" fill="#444"/><path d="M2 8.500c1-1.500 6-1.500 7 0l-1.500 1.500h-4z" fill="#444"/></svg>
<div class="a" style="left:1050px;top:631px;width:156px;height:16px;overflow:hidden;font-size:10.800px;color:#55585b;line-height:16px;white-space:nowrap">admin@appsheet-demo3.yoshida</div>
<div class="a" style="left:1220px;top:626px;width:47px;height:25px;background:#dfdfd6;border-radius:2px;font-size:9px;color:#c0c0b8;text-align:center;line-height:24px">Apply</div>
<div class="t" style="left:1027px;top:663px;font-size:7.500px;color:#8a8c8e">View:</div>
<div class="t" style="left:1050px;top:663px;font-size:8px;color:#6b95da">メニューに表示するビュー</div>
<div class="t" style="left:1152px;top:663px;font-size:7.500px;color:#8a8c8e">|</div>
<div class="t" style="left:1161px;top:663px;font-size:7.500px;color:#8a8c8e">Table:</div>
<div class="t" style="left:1185px;top:663px;font-size:7.500px;color:#4f7fd6;font-weight:700">S_GooTorial</div>
</div></body></html>
